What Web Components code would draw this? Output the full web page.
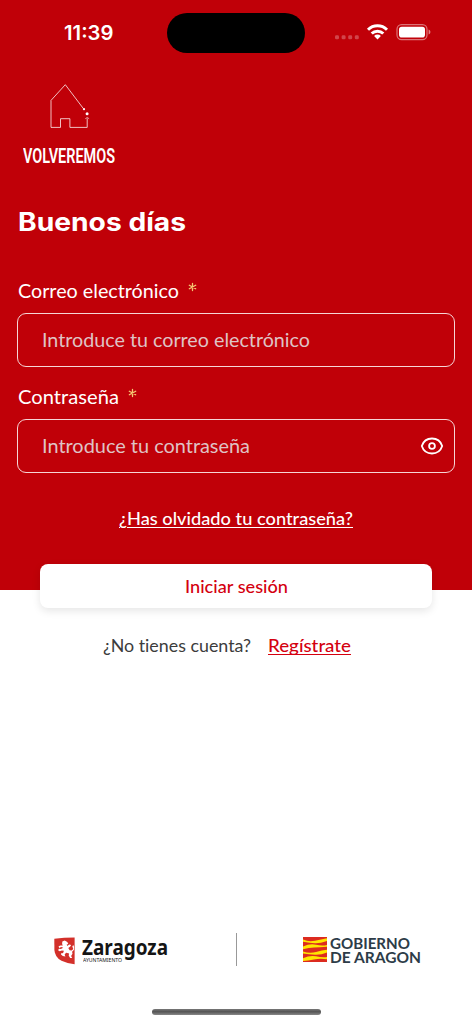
<!DOCTYPE html>
<html lang="es">
<head>
<meta charset="utf-8">
<meta name="viewport" content="width=device-width, initial-scale=1">
<title>Volveremos</title>
<style>
    body {
        margin: 0;
        background: #fff;
        font-family: Lato, "Open Sans", sans-serif;
        font-variant-ligatures: none;
    }
</style>
</head>
<body>
<login-screen></login-screen>

<script>
/**
 * One line of text, stretched or condensed to a given width.
 * Font size, weight and colour are inherited from the user of the element.
 */
class FitText extends HTMLElement {
    constructor() {
        super();
        this.attachShadow({ mode: 'open' });
        this.shadowRoot.innerHTML = `
            <style>
                :host { display: block; white-space: nowrap; flex: none; }
                span { display: inline-block; transform-origin: 0 50%; }
            </style>
            <span><slot></slot></span>
        `;
    }

    connectedCallback() {
        const width = Number(this.getAttribute('width'));
        const span = this.shadowRoot.querySelector('span');
        this.style.width = `${width}px`;
        span.style.transform = `scaleX(${width / span.getBoundingClientRect().width})`;
    }
}

class StatusBar extends HTMLElement {
    constructor() {
        super();
        this.attachShadow({ mode: 'open' });
        this.shadowRoot.innerHTML = `
            <style>
                :host {
                    display: grid;
                    grid-template-columns: 167px 138px 1fr;
                    height: 40px;
                    padding-top: 13px;
                    color: #fff;
                }
                .time { padding-left: 64px; font: 600 20px/40px Inter, sans-serif; }
                .island { background: #000; border-radius: 20px; }
                svg { display: block; margin-left: 29px; }
            </style>
            <div class="time"><fit-text width="49.5">11:39</fit-text></div>
            <div class="island"></div>
            <svg width="100" height="40" viewBox="334 13 100 40" fill="#fff">
                <g opacity=".27">
                    <rect x="335" y="35.3" width="4" height="4" rx="1.4"/>
                    <rect x="341.6" y="35.3" width="4" height="4" rx="1.4"/>
                    <rect x="348.2" y="35.3" width="4" height="4" rx="1.4"/>
                    <rect x="354.8" y="35.3" width="4" height="4" rx="1.4"/>
                </g>
                <g fill="none" stroke="#fff" stroke-width="3">
                    <path d="M368 29.7a13.6 13.6 0 0 1 19 0"/>
                    <path d="M371.7 33.5a8.3 8.3 0 0 1 11.6 0"/>
                </g>
                <path d="M377.5 39.4l-3.4-3.5a4.8 4.8 0 0 1 6.8 0z"/>
                <rect x="397" y="24.6" width="30" height="15" rx="4.6" fill="none" stroke="#fff" stroke-opacity=".45" stroke-width="1.2"/>
                <rect x="399" y="26.7" width="26" height="10.8" rx="2.8"/>
                <path d="M428.6 29.6c2.4.8 2.4 4.2 0 5z" opacity=".5"/>
            </svg>
        `;
    }
}

class BrandLogo extends HTMLElement {
    constructor() {
        super();
        this.attachShadow({ mode: 'open' });
        this.shadowRoot.innerHTML = `
            <style>
                :host { display: block; width: 92px; color: #fff; }
                svg { display: block; margin-left: 26px; }
                fit-text { margin-top: 11px; font: 600 21px/30px Roboto, sans-serif; }
            </style>
            <svg width="42" height="48" viewBox="49 82 42 48" fill="none" stroke="#fff" stroke-width=".75">
                <path d="M83.4 108.6L65.3 84.7 51 100.4v27h9.5v-8.7h9.4v8.7h17.3v-9"/>
                <path d="M85.3 118.7l1.9-1.2 1.9 1.2" stroke-width=".6"/>
                <circle cx="84" cy="109.2" r="1.1" fill="#fff" stroke="none"/>
                <circle cx="87.1" cy="113.7" r="1.5" fill="#fff" stroke="none"/>
            </svg>
            <fit-text width="92">VOLVEREMOS</fit-text>
        `;
    }
}

/** Label with a required mark over an outlined box; the slot holds a trailing icon. */
class FormField extends HTMLElement {
    constructor() {
        super();
        this.attachShadow({ mode: 'open' });
        this.shadowRoot.innerHTML = `
            <style>
                :host { display: block; color: #fff; font-size: 20px; line-height: 30px; }
                .label { display: flex; gap: 9px; padding-left: 1px; }
                .mark { display: block; }
                .box {
                    display: flex;
                    align-items: center;
                    justify-content: space-between;
                    box-sizing: border-box;
                    height: 54px;
                    margin-top: 8px;
                    padding: 0 10px 0 24px;
                    border: 1.3px solid #f6d5d6;
                    border-radius: 9px;
                    color: #dfc3c5;
                }
                .box fit-text { margin-bottom: 2px; }
            </style>
            <div class="label">
                <fit-text width="${this.getAttribute('name-width')}">${this.getAttribute('name')}</fit-text>
                <svg class="mark" width="9" height="30" viewBox="0 0 9 30" stroke="#f5c873" stroke-width="1.3" stroke-linecap="round">
                    <path d="M4.5 8.4v7.2M1.3 10.2l6.4 3.6M7.7 10.2l-6.4 3.6"/>
                </svg>
            </div>
            <div class="box">
                <fit-text width="${this.getAttribute('hint-width')}">${this.getAttribute('hint')}</fit-text>
                <slot></slot>
            </div>
        `;
    }
}

class EyeIcon extends HTMLElement {
    constructor() {
        super();
        this.attachShadow({ mode: 'open' });
        this.shadowRoot.innerHTML = `
            <style>
                :host, svg { display: block; }
            </style>
            <svg width="24" height="20" viewBox="0 0 24 20" fill="none" stroke="#fff" stroke-width="1.8">
                <path d="M1.8 10C3.3 5.4 7.3 2.5 12 2.5S20.7 5.4 22.2 10C20.7 14.6 16.7 17.5 12 17.5S3.3 14.6 1.8 10z" stroke-linejoin="round"/>
                <circle cx="12" cy="10" r="2.9"/>
            </svg>
        `;
    }
}

class MainButton extends HTMLElement {
    constructor() {
        super();
        this.attachShadow({ mode: 'open' });
        this.shadowRoot.innerHTML = `
            <style>
                :host {
                    display: flex;
                    justify-content: center;
                    height: 44px;
                    border-radius: 8px;
                    background: #fff;
                    box-shadow: 0 3px 8px rgba(0, 0, 0, .1);
                    color: #d4000f;
                    font: 500 18px/45px Lato, sans-serif;
                }
            </style>
            <slot></slot>
        `;
    }
}

class ZaragozaLogo extends HTMLElement {
    constructor() {
        super();
        this.attachShadow({ mode: 'open' });
        this.shadowRoot.innerHTML = `
            <style>
                :host { display: flex; gap: 7px; color: #151515; }
                svg { display: block; margin-top: 2px; }
                .town { font: 700 20.5px/24px "Noto Sans", sans-serif; }
                .council { font: 400 5.8px/7px "Noto Sans", sans-serif; margin: -2px 0 0 1px; }
            </style>
            <svg width="21" height="28" viewBox="0 0 21 28">
                <path d="M.3 1.7Q10 .4 20.6.4V27.2Q13 26.5 7.5 23.8Q1 20.5.4 13z" fill="#d3302a"/>
                <path d="M8.3 4.5l2.4-.9 2.6 1.3 1 2-1.6.7.5 1.4 2.1-1.5 1.8.5-.8 1.6-2 1.3 1.3 2.3 2.1.3 1.6-1.6-1-2.3.9-1.7.9 1.9-.1 3-1.9 2 .4 2-1.4 2.2 1.1 1.9-2.1.2-1.4-2.5.4-2.2-3-.6-1.5 1.6.8 2.1-2.6-.6-1.8-1.4.4-1.4 1.6.2.9-2.6-2-.2-2.3.8-1.5-1 .8-1.5 2 .2 2.4-1.2-2.1-.7-2 .9-.6-1.8 1.8-.8 2.4.2-.7-1.5z" fill="#fff"/>
            </svg>
            <div>
                <fit-text class="town" width="86">Zaragoza</fit-text>
                <fit-text class="council" width="39">AYUNTAMIENTO</fit-text>
            </div>
        `;
    }
}

class AragonLogo extends HTMLElement {
    constructor() {
        super();
        this.attachShadow({ mode: 'open' });
        this.shadowRoot.innerHTML = `
            <style>
                :host { display: flex; gap: 3px; color: #2d3c48; font: 700 16px/14px Lato, sans-serif; }
                svg { display: block; margin-top: 2px; }
                .lines { padding-top: 1px; }
            </style>
            <svg width="24" height="26" viewBox="0 0 24 26">
                <path d="M0 0h24v25H0z" fill="#dc2b20"/>
                <g fill="#ffe600">
                    <path d="M0 2.6Q6 5.2 12 3.8T24 1.2V4Q17 6.5 12 6.3T0 4.7z"/>
                    <path d="M0 9.6Q7 6.3 13 7.8T24 8V9.8Q16 10.5 11 10.6T0 12.3z"/>
                    <path d="M0 14.6Q7 16.8 13 15T24 12.7V15.5Q18 18 12 17.7T0 16.6z"/>
                    <path d="M0 21.3Q7 18 13 19.3T24 20V22.2Q17 21.2 11 22.4T0 24z"/>
                </g>
            </svg>
            <div class="lines">
                <fit-text width="80">GOBIERNO</fit-text>
                <fit-text width="91">DE ARAGON</fit-text>
            </div>
        `;
    }
}

class LoginScreen extends HTMLElement {
    constructor() {
        super();
        this.attachShadow({ mode: 'open' });
        this.shadowRoot.innerHTML = `
            <style>
                :host {
                    display: flex;
                    flex-direction: column;
                    box-sizing: border-box;
                    height: 1024px;
                    background: linear-gradient(#c00008 590.5px, #fff 590.5px);
                    overflow: hidden;
                }
                brand-logo { margin: 29px 0 0 23px; }
                .title { margin: 31px 0 0 18px; color: #fff; font: 700 25.5px/40px Inter, sans-serif; }
                form-field { margin: 33px 17px 0; }
                form-field + form-field { margin-top: 14px; }
                .forgot {
                    display: flex;
                    margin: 31px 0 0 119px;
                    color: #fff;
                    font-size: 17.5px;
                    font-weight: 500;
                    line-height: 30px;
                }
                u { text-decoration-thickness: 1px; text-underline-offset: 2px; }
                main-button { margin: 30px 40px 0; }
                .register {
                    display: flex;
                    gap: 17px;
                    margin: 23px 0 0 103px;
                    color: #3c3c3c;
                    font-size: 17.5px;
                    line-height: 30px;
                }
                .register .link { color: #d4000f; font-weight: 500; }
                .register u { text-decoration-skip-ink: none; }
                footer {
                    display: grid;
                    grid-template-columns: 182px 67px 1fr;
                    margin: auto 0 43px 54px;
                }
                .divider { width: 1px; height: 33px; background: #999; }
                .partner { padding-top: 2px; }
                .home {
                    width: 169px;
                    height: 6px;
                    margin: 0 0 9px 152px;
                    border-radius: 3px;
                    background: linear-gradient(#777, #555 45%, #888);
                }
            </style>
            <status-bar></status-bar>
            <brand-logo></brand-logo>
            <fit-text class="title" width="168">Buenos días</fit-text>
            <form-field name="Correo electrónico" name-width="161" hint="Introduce tu correo electrónico" hint-width="268"></form-field>
            <form-field name="Contraseña" name-width="101" hint="Introduce tu contraseña" hint-width="208">
                <eye-icon></eye-icon>
            </form-field>
            <div class="forgot"><fit-text width="234"><u>¿Has olvidado tu contraseña?</u></fit-text></div>
            <main-button><fit-text width="103">Iniciar sesión</fit-text></main-button>
            <div class="register">
                <fit-text width="148">¿No tienes cuenta?</fit-text>
                <fit-text class="link" width="83"><u>Regístrate</u></fit-text>
            </div>
            <footer>
                <zaragoza-logo class="partner"></zaragoza-logo>
                <div class="divider"></div>
                <aragon-logo class="partner"></aragon-logo>
            </footer>
            <div class="home"></div>
        `;
    }
}

customElements.define('fit-text', FitText);
customElements.define('status-bar', StatusBar);
customElements.define('brand-logo', BrandLogo);
customElements.define('form-field', FormField);
customElements.define('eye-icon', EyeIcon);
customElements.define('main-button', MainButton);
customElements.define('zaragoza-logo', ZaragozaLogo);
customElements.define('aragon-logo', AragonLogo);
customElements.define('login-screen', LoginScreen);
</script>
</body>
</html>
